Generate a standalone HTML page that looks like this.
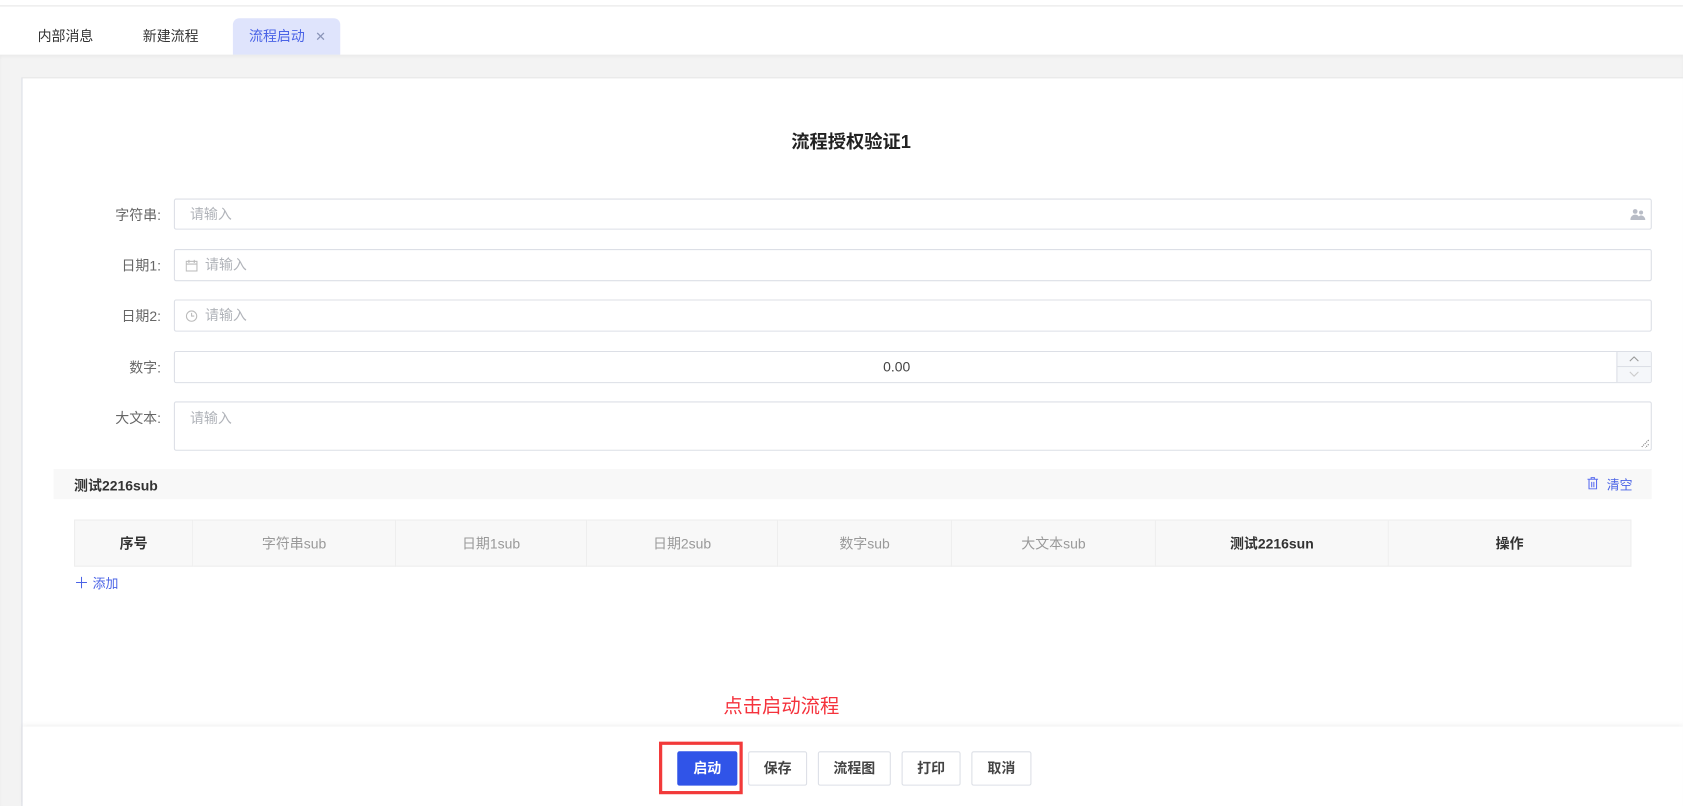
<!DOCTYPE html>
<html><head><meta charset="utf-8"><style>
*{box-sizing:border-box;margin:0;padding:0}
html,body{width:1683px;height:806px;overflow:hidden;background:#fff}
#w{position:absolute;left:0;top:0;width:1568px;height:751px;transform:scale(1.0733);transform-origin:0 0;font-family:"Liberation Sans","Noto Sans CJK SC",sans-serif;font-size:13px;color:#333}
.abs{position:absolute}
.topline{left:0;top:5px;width:1568px;height:1px;background:#e6e6e6}
.tab{top:17px;height:34px;line-height:34px;font-size:13px;color:#333}
.gray{left:0;top:51px;width:1568px;height:700px;background:#f3f3f3;box-shadow:inset 0 2px 3px rgba(0,0,0,.04)}
.card{left:20px;top:72px;width:1548px;height:679px;background:#fff;border-left:1px solid #dcdfe6;border-top:1px solid #e4e4e4}
.lbl{width:100px;text-align:right;color:#666;font-size:13px;left:50px}
.inp{left:162px;width:1377px;border:1px solid #dcdfe6;border-radius:2px;background:#fff;color:#b0b3b9;font-size:13px}
.th{top:484px;height:44px;line-height:44px;text-align:center;background:#f8f8f8;border-right:1px solid #eee;border-top:1px solid #eee;border-bottom:1px solid #eee;font-size:13px;color:#999}
.th.b{color:#333;font-weight:bold}
.btn{top:700px;height:32px;line-height:30px;border:1px solid #dcdfe6;border-radius:2px;text-align:center;font-weight:bold;font-size:13px;color:#444;background:#fff}
</style></head><body><div id="w">
<div class="abs topline"></div>
<div class="abs tab" style="left:35px">内部消息</div>
<div class="abs tab" style="left:133px">新建流程</div>
<div class="abs" style="left:217px;top:17px;width:100px;height:34px;background:#dfe4fc;border-radius:6px 6px 0 0"></div>
<div class="abs tab" style="left:232px;color:#4a63e6">流程启动 <span style="color:#8a94b8;margin-left:6px;font-size:12px">✕</span></div>
<div class="abs gray"></div>
<div class="abs card"></div>
<div class="abs" style="left:0;top:118px;width:1586px;text-align:center;font-size:17px;font-weight:bold;color:#222">流程授权验证1</div>

<div class="abs lbl" style="top:190px">字符串:</div>
<div class="abs inp" style="top:185px;height:29px;line-height:27px;padding-left:14px">请输入
<svg class="abs" style="right:5px;top:8px" width="14" height="12" viewBox="0 0 14 12"><circle cx="4.5" cy="3" r="2.2" fill="#b8bcc6"/><path d="M0 11c0-3 2-5 4.5-5S9 8 9 11z" fill="#b8bcc6"/><circle cx="10" cy="4" r="1.9" fill="#b8bcc6"/><path d="M7 11c0-2.5 1.3-4.3 3-4.3S14 8.5 14 11z" fill="#b8bcc6"/></svg></div>

<div class="abs lbl" style="top:237px">日期1:</div>
<div class="abs inp" style="top:232px;height:30px;line-height:28px;padding-left:28px">请输入
<svg class="abs" style="left:10px;top:9px" width="11" height="11" viewBox="0 0 11 11"><rect x=".5" y="1.5" width="10" height="9" fill="none" stroke="#bbb"/><path d="M.5 4h10M3 0v3M8 0v3" stroke="#bbb"/></svg></div>

<div class="abs lbl" style="top:284px">日期2:</div>
<div class="abs inp" style="top:279px;height:30px;line-height:28px;padding-left:28px">请输入
<svg class="abs" style="left:10px;top:9px" width="11" height="11" viewBox="0 0 11 11"><circle cx="5.5" cy="5.5" r="4.8" fill="none" stroke="#bbb"/><path d="M5.5 2.5v3h2.5" fill="none" stroke="#bbb"/></svg></div>

<div class="abs lbl" style="top:332px">数字:</div>
<div class="abs inp" style="top:327px;height:30px;line-height:28px;text-align:center;color:#444;padding-right:30px">0.00
<div class="abs" style="right:0;top:0;width:32px;height:28px;background:#f5f7fa;border-left:1px solid #dcdfe6">
<div style="height:14px;border-bottom:1px solid #dcdfe6;position:relative"><svg class="abs" style="left:11px;top:4px" width="9" height="5"><path d="M.5 4.5l4-4 4 4" fill="none" stroke="#999"/></svg></div>
<div style="position:relative"><svg class="abs" style="left:11px;top:4px" width="9" height="5"><path d="M.5.5l4 4 4-4" fill="none" stroke="#ccc"/></svg></div></div></div>

<div class="abs lbl" style="top:379px">大文本:</div>
<div class="abs inp" style="top:374px;height:46px;padding:4px 14px">请输入
<svg class="abs" style="right:1px;bottom:1px" width="9" height="9"><path d="M8 1L1 8M8 5L5 8" stroke="#777" stroke-dasharray="1 1"/></svg></div>

<div class="abs" style="left:50px;top:437px;width:1489px;height:28px;background:#f8f8f8"></div>
<div class="abs" style="left:69px;top:442px;font-weight:bold;color:#333">测试2216sub</div>
<svg class="abs" style="left:1479px;top:444px" width="10" height="12" viewBox="0 0 10 12"><path d="M0 2.5h10M3.5 2.5V1h3v1.5M1.5 2.5v9h7v-9M4 5v5M6 5v5" fill="none" stroke="#5b6ef0"/></svg>
<div class="abs" style="left:1497px;top:443px;color:#4a63e6;font-size:12px">清空</div>

<div class="abs th b" style="left:69px;width:111px;border-left:1px solid #eee">序号</div>
<div class="abs th" style="left:180px;width:189px">字符串sub</div>
<div class="abs th" style="left:369px;width:178px">日期1sub</div>
<div class="abs th" style="left:547px;width:178px">日期2sub</div>
<div class="abs th" style="left:725px;width:162px">数字sub</div>
<div class="abs th" style="left:887px;width:190px">大文本sub</div>
<div class="abs th b" style="left:1077px;width:217px">测试2216sun</div>
<div class="abs th b" style="left:1294px;width:226px">操作</div>
<div class="abs" style="left:69px;top:533px;color:#4a63e6;font-size:12px"><span style="font-size:14px">＋</span> 添加</div>

<div class="abs" style="left:674px;top:644px;color:#f5323c;font-size:18px">点击启动流程</div>
<div class="abs" style="left:21px;top:677px;width:1547px;height:74px;background:#fff;box-shadow:0 -2px 4px rgba(0,0,0,.05)"></div>
<div class="abs" style="left:614px;top:691px;width:78px;height:49px;border:3px solid #f23a3a"></div>
<div class="abs btn" style="left:631px;width:56px;background:#3054e8;border-color:#3054e8;color:#fff">启动</div>
<div class="abs btn" style="left:697px;width:55px">保存</div>
<div class="abs btn" style="left:762px;width:68px">流程图</div>
<div class="abs btn" style="left:840px;width:55px">打印</div>
<div class="abs btn" style="left:905px;width:56px">取消</div>
</div></body></html>
